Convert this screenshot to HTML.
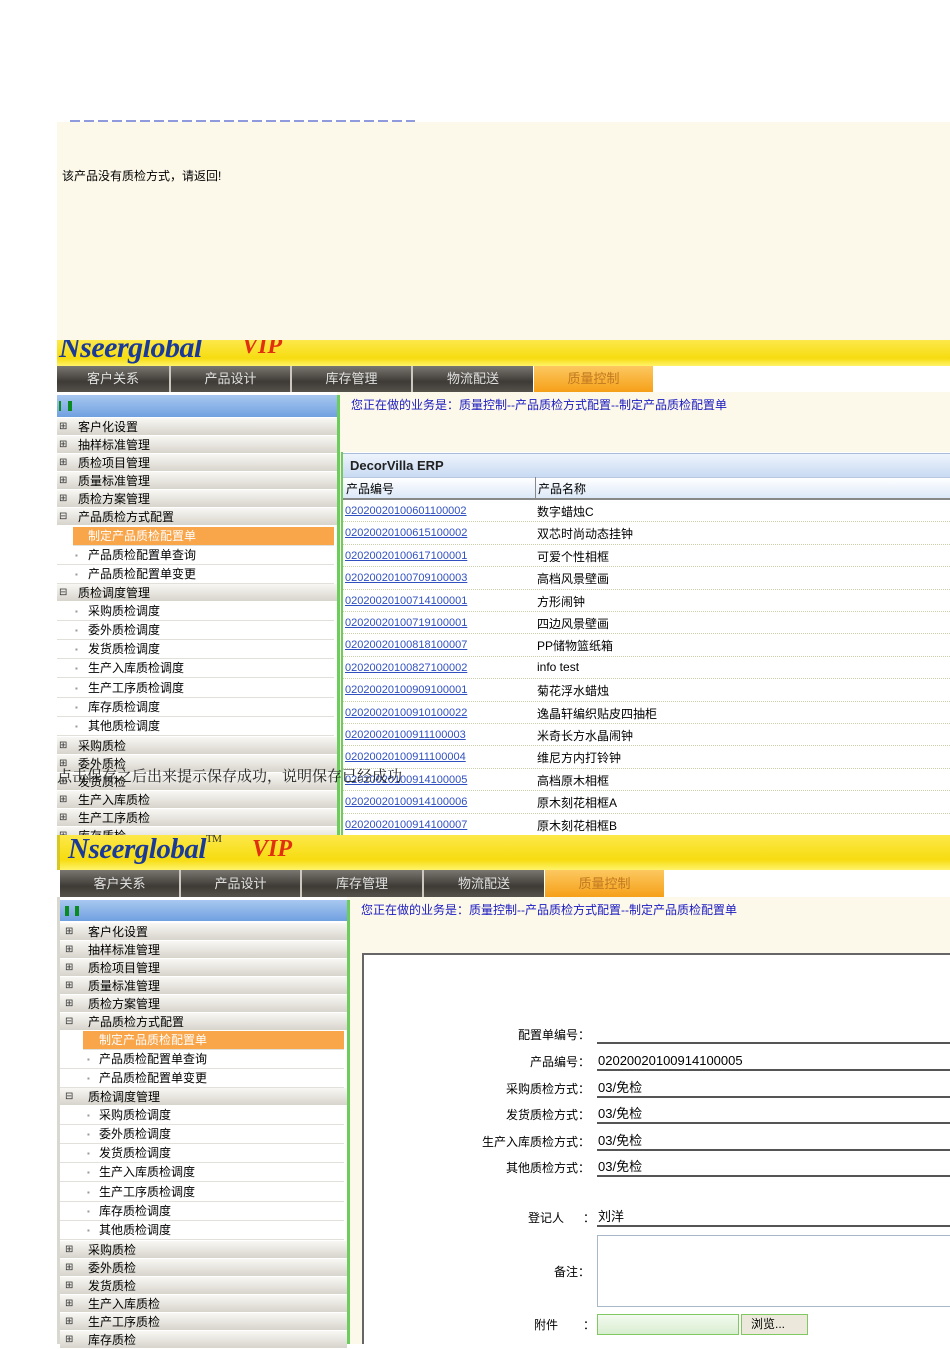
<!DOCTYPE html>
<html><head><meta charset="utf-8"><style>
*{margin:0;padding:0;box-sizing:border-box}
body{width:950px;height:1344px;position:relative;overflow:hidden;background:#fff;font-family:"Liberation Sans","Noto Sans CJK SC","WenQuanYi Zen Hei",sans-serif;font-size:12px;color:#000}
.a{position:absolute}
.cream{background:#fcf8ea}
.ban{background:linear-gradient(#fde84a,#f6dc10 70%,#fff36a)}
.logo{font-family:"Liberation Serif",serif;font-style:italic;font-weight:bold;color:#1a3a9a;font-size:28px;letter-spacing:-0.5px}
.vip{font-family:"Liberation Serif",serif;font-style:italic;font-weight:bold;color:#e03010;font-size:24px}
.tab{position:absolute;background:linear-gradient(#7a7670,#3e3b36 60%,#55514b);color:#e0e0e0;font-size:13px;text-align:center;border-left:2px solid #ccc8c0}
.tab.on{background:linear-gradient(#fcc860,#f6a018);color:#c07820;border:none}
.hd{position:absolute;background:linear-gradient(#a8c8f0,#70a0e0);}
.hd i{position:absolute;top:6px;width:4px;height:10px;background:#0a8a20}
.r{position:absolute;height:18px;line-height:18px;font-size:12px;background:linear-gradient(#f8f7f3,#d7d4cc);border-bottom:1px solid #fff}
.r b{font-weight:normal;position:absolute;left:2px;top:0;font-size:10px;color:#333}
.r span{position:absolute;left:21px}
.s{position:absolute;height:19px;line-height:19px;background:#fff;border-bottom:1px solid #e2e0da}
.s span{position:absolute;left:31px}
.s b{font-weight:normal;position:absolute;left:18px;font-size:8px;color:#999}
.s.on{background:#f9a54a;color:#fff}
.gl{position:absolute;background:#6ccc5c;width:3px}
.bc{position:absolute;color:#1a1ac0;font-size:12px}
.tr{position:absolute;left:343px;width:607px;height:22.4px;border-bottom:1px dotted #c8d0a8;background:#fff}
.tr a{position:absolute;left:2px;top:5px;color:#3050c0;text-decoration:underline;font-size:11px}
.tr span{position:absolute;left:194px;top:3px;font-size:12px}
.fl{position:absolute;width:240px;text-align:right;left:350px;font-size:12px}
.fv{position:absolute;left:597px;width:353px;border-bottom:2px solid #555;height:20px;font-size:13px;padding-left:1px;line-height:20px}
</style></head><body>

<div class="a cream" style="left:57px;top:122px;width:893px;height:218px"></div>
<div class="a" style="left:70px;top:120px;width:345px;height:2px;background:repeating-linear-gradient(90deg,#6070d0 0 10px,transparent 10px 14px);opacity:.7"></div>
<div class="a" style="left:62px;top:167px;font-size:12px">该产品没有质检方式，请返回!</div>

<div class="a ban" style="left:57px;top:340px;width:893px;height:26px;overflow:hidden">
<div class="a logo" style="left:2px;top:-9px;font-size:30px">Nseerglobal</div>
<div class="a vip" style="left:185px;top:-7px">VIP</div>
</div>
<div class="a" style="left:57px;top:366px;width:893px;height:26px;background:#fff"></div>
<div class="tab" style="left:57px;top:366px;width:112px;height:26px;line-height:26px;border:none">客户关系</div>
<div class="tab" style="left:169px;top:366px;width:121px;height:26px;line-height:26px">产品设计</div>
<div class="tab" style="left:290px;top:366px;width:121px;height:26px;line-height:26px">库存管理</div>
<div class="tab" style="left:411px;top:366px;width:122px;height:26px;line-height:26px">物流配送</div>
<div class="tab on" style="left:534px;top:366px;width:119px;height:26px;line-height:26px">质量控制</div>
<div class="a cream" style="left:337px;top:392px;width:613px;height:443px"></div>
<div class="a" style="left:57px;top:392px;width:280px;height:443px;background:#fff"></div>
<div class="hd" style="left:57px;top:395px;width:280px;height:22px"><i style="left:2px;width:2px"></i><i style="left:11px"></i></div>
<div class="gl" style="left:337px;top:395px;height:440px"></div>
<div class="bc" style="left:351px;top:396px">您正在做的业务是：质量控制--产品质检方式配置--制定产品质检配置单</div>

<div class="r" style="left:57px;top:418px;width:280px"><b>⊞</b><span>客户化设置</span></div>
<div class="r" style="left:57px;top:436px;width:280px"><b>⊞</b><span>抽样标准管理</span></div>
<div class="r" style="left:57px;top:454px;width:280px"><b>⊞</b><span>质检项目管理</span></div>
<div class="r" style="left:57px;top:472px;width:280px"><b>⊞</b><span>质量标准管理</span></div>
<div class="r" style="left:57px;top:490px;width:280px"><b>⊞</b><span>质检方案管理</span></div>
<div class="r" style="left:57px;top:508px;width:280px"><b>⊟</b><span>产品质检方式配置</span></div>
<div class="s on" style="left:73px;top:527px;width:261px"><span style="left:15px">制定产品质检配置单</span></div>
<div class="s" style="left:57px;top:546px;width:277px"><b>▪</b><span>产品质检配置单查询</span></div>
<div class="s" style="left:57px;top:565px;width:277px"><b>▪</b><span>产品质检配置单变更</span></div>
<div class="r" style="left:57px;top:584px;width:280px"><b>⊟</b><span>质检调度管理</span></div>
<div class="s" style="left:57px;top:602px;width:277px"><b>▪</b><span>采购质检调度</span></div>
<div class="s" style="left:57px;top:621px;width:277px"><b>▪</b><span>委外质检调度</span></div>
<div class="s" style="left:57px;top:640px;width:277px"><b>▪</b><span>发货质检调度</span></div>
<div class="s" style="left:57px;top:659px;width:277px"><b>▪</b><span>生产入库质检调度</span></div>
<div class="s" style="left:57px;top:679px;width:277px"><b>▪</b><span>生产工序质检调度</span></div>
<div class="s" style="left:57px;top:698px;width:277px"><b>▪</b><span>库存质检调度</span></div>
<div class="s" style="left:57px;top:717px;width:277px"><b>▪</b><span>其他质检调度</span></div>
<div class="r" style="left:57px;top:737px;width:280px"><b>⊞</b><span>采购质检</span></div>
<div class="r" style="left:57px;top:755px;width:280px"><b>⊞</b><span>委外质检</span></div>
<div class="r" style="left:57px;top:773px;width:280px"><b>⊞</b><span>发货质检</span></div>
<div class="r" style="left:57px;top:791px;width:280px"><b>⊞</b><span>生产入库质检</span></div>
<div class="r" style="left:57px;top:809px;width:280px"><b>⊞</b><span>生产工序质检</span></div>
<div class="r" style="left:57px;top:827px;width:280px"><b>⊞</b><span>库存质检</span></div>

<div class="a" style="left:341px;top:452px;width:609px;height:383px;background:#fff;border-left:2px solid #6ccc5c"></div>
<div class="a" style="left:343px;top:453px;width:607px;height:24px;background:linear-gradient(#eef4fc,#c8daf2);border-top:1px solid #a8bcd8;font-weight:bold;font-size:13px;line-height:24px;padding-left:7px;color:#222">DecorVilla ERP</div>
<div class="a" style="left:343px;top:477px;width:607px;height:23px;background:linear-gradient(#fff,#dce8f8);border-bottom:2px solid #888;border-top:1px solid #b8c8e0"></div>
<div class="a" style="left:346px;top:480px;font-size:12px">产品编号</div>
<div class="a" style="left:535px;top:477px;width:1px;height:23px;background:#888"></div>
<div class="a" style="left:538px;top:480px;font-size:12px">产品名称</div>
<div class="tr" style="top:500px"><a>02020020100601100002</a><span>数字蜡烛C</span></div>
<div class="tr" style="top:522.4px"><a>02020020100615100002</a><span>双芯时尚动态挂钟</span></div>
<div class="tr" style="top:544.8px"><a>02020020100617100001</a><span>可爱个性相框</span></div>
<div class="tr" style="top:567.2px"><a>02020020100709100003</a><span>高档风景壁画</span></div>
<div class="tr" style="top:589.6px"><a>02020020100714100001</a><span>方形闹钟</span></div>
<div class="tr" style="top:612px"><a>02020020100719100001</a><span>四边风景壁画</span></div>
<div class="tr" style="top:634.4px"><a>02020020100818100007</a><span>PP储物篮纸箱</span></div>
<div class="tr" style="top:656.8px"><a>02020020100827100002</a><span>info test</span></div>
<div class="tr" style="top:679.2px"><a>02020020100909100001</a><span>菊花浮水蜡烛</span></div>
<div class="tr" style="top:701.6px"><a>02020020100910100022</a><span>逸晶轩编织贴皮四抽柜</span></div>
<div class="tr" style="top:724px"><a>02020020100911100003</a><span>米奇长方水晶闹钟</span></div>
<div class="tr" style="top:746.4px"><a>02020020100911100004</a><span>维尼方内打铃钟</span></div>
<div class="tr" style="top:768.8px"><a>02020020100914100005</a><span>高档原木相框</span></div>
<div class="tr" style="top:791.2px"><a>02020020100914100006</a><span>原木刻花相框A</span></div>
<div class="tr" style="top:813.6px"><a>02020020100914100007</a><span>原木刻花相框B</span></div>
<div class="a" style="left:57px;top:765px;font-family:'Noto Serif CJK SC','Liberation Serif',serif;font-size:15px;color:#222">点击保存之后出来提示保存成功，说明保存已经成功</div>

<div class="a ban" style="left:57px;top:835px;width:893px;height:35px;border-left:3px solid #d8c820"></div>
<div class="a logo" style="left:68px;top:833px;font-size:29px">Nseerglobal<sup style="font-size:11px;font-style:normal;font-weight:normal;color:#333;vertical-align:top">TM</sup></div>
<div class="a vip" style="left:252px;top:836px">VIP</div>
<div class="a" style="left:57px;top:870px;width:893px;height:27px;background:#fff"></div>
<div class="tab" style="left:60px;top:870px;width:119px;height:27px;line-height:27px;border:none">客户关系</div>
<div class="tab" style="left:179px;top:870px;width:121px;height:27px;line-height:27px">产品设计</div>
<div class="tab" style="left:300px;top:870px;width:122px;height:27px;line-height:27px">库存管理</div>
<div class="tab" style="left:422px;top:870px;width:122px;height:27px;line-height:27px">物流配送</div>
<div class="tab on" style="left:545px;top:870px;width:119px;height:27px;line-height:27px">质量控制</div>
<div class="a cream" style="left:347px;top:897px;width:603px;height:447px"></div>
<div class="a" style="left:57px;top:897px;width:290px;height:447px;background:#fff;border-left:3px solid #d8d8d0"></div>
<div class="hd" style="left:60px;top:900px;width:287px;height:21px"><i style="left:5px"></i><i style="left:15px"></i></div>
<div class="gl" style="left:347px;top:900px;height:444px"></div>
<div class="bc" style="left:361px;top:901px">您正在做的业务是：质量控制--产品质检方式配置--制定产品质检配置单</div>

<div class="r" style="left:60px;top:923px;width:287px"><b style="left:5px">⊞</b><span style="left:28px">客户化设置</span></div>
<div class="r" style="left:60px;top:941px;width:287px"><b style="left:5px">⊞</b><span style="left:28px">抽样标准管理</span></div>
<div class="r" style="left:60px;top:959px;width:287px"><b style="left:5px">⊞</b><span style="left:28px">质检项目管理</span></div>
<div class="r" style="left:60px;top:977px;width:287px"><b style="left:5px">⊞</b><span style="left:28px">质量标准管理</span></div>
<div class="r" style="left:60px;top:995px;width:287px"><b style="left:5px">⊞</b><span style="left:28px">质检方案管理</span></div>
<div class="r" style="left:60px;top:1013px;width:287px"><b style="left:5px">⊟</b><span style="left:28px">产品质检方式配置</span></div>
<div class="s on" style="left:83px;top:1031px;width:261px"><span style="left:16px">制定产品质检配置单</span></div>
<div class="s" style="left:60px;top:1050px;width:284px"><b style="left:27px">▪</b><span style="left:39px">产品质检配置单查询</span></div>
<div class="s" style="left:60px;top:1069px;width:284px"><b style="left:27px">▪</b><span style="left:39px">产品质检配置单变更</span></div>
<div class="r" style="left:60px;top:1088px;width:287px"><b style="left:5px">⊟</b><span style="left:28px">质检调度管理</span></div>
<div class="s" style="left:60px;top:1106px;width:284px"><b style="left:27px">▪</b><span style="left:39px">采购质检调度</span></div>
<div class="s" style="left:60px;top:1125px;width:284px"><b style="left:27px">▪</b><span style="left:39px">委外质检调度</span></div>
<div class="s" style="left:60px;top:1144px;width:284px"><b style="left:27px">▪</b><span style="left:39px">发货质检调度</span></div>
<div class="s" style="left:60px;top:1163px;width:284px"><b style="left:27px">▪</b><span style="left:39px">生产入库质检调度</span></div>
<div class="s" style="left:60px;top:1183px;width:284px"><b style="left:27px">▪</b><span style="left:39px">生产工序质检调度</span></div>
<div class="s" style="left:60px;top:1202px;width:284px"><b style="left:27px">▪</b><span style="left:39px">库存质检调度</span></div>
<div class="s" style="left:60px;top:1221px;width:284px"><b style="left:27px">▪</b><span style="left:39px">其他质检调度</span></div>
<div class="r" style="left:60px;top:1241px;width:287px"><b style="left:5px">⊞</b><span style="left:28px">采购质检</span></div>
<div class="r" style="left:60px;top:1259px;width:287px"><b style="left:5px">⊞</b><span style="left:28px">委外质检</span></div>
<div class="r" style="left:60px;top:1277px;width:287px"><b style="left:5px">⊞</b><span style="left:28px">发货质检</span></div>
<div class="r" style="left:60px;top:1295px;width:287px"><b style="left:5px">⊞</b><span style="left:28px">生产入库质检</span></div>
<div class="r" style="left:60px;top:1313px;width:287px"><b style="left:5px">⊞</b><span style="left:28px">生产工序质检</span></div>
<div class="r" style="left:60px;top:1331px;width:287px"><b style="left:5px">⊞</b><span style="left:28px">库存质检</span></div>

<div class="a" style="left:362px;top:953px;width:588px;height:391px;background:#fff;border-left:2px solid #666;border-top:2px solid #666"></div>
<div class="fl" style="top:1026px">配置单编号：</div><div class="fv" style="top:1024px"></div>
<div class="fl" style="top:1053px">产品编号：</div><div class="fv" style="top:1051px">02020020100914100005</div>
<div class="fl" style="top:1080px">采购质检方式：</div><div class="fv" style="top:1078px">03/免检</div>
<div class="fl" style="top:1106px">发货质检方式：</div><div class="fv" style="top:1104px">03/免检</div>
<div class="fl" style="top:1133px">生产入库质检方式：</div><div class="fv" style="top:1131px">03/免检</div>
<div class="fl" style="top:1159px">其他质检方式：</div><div class="fv" style="top:1157px">03/免检</div>
<div class="a" style="left:528px;top:1209px">登记人</div><div class="a" style="left:583px;top:1209px">：</div>
<div class="fv" style="top:1207px">刘洋</div>
<div class="fl" style="top:1263px">备注：</div>
<div class="a" style="left:597px;top:1235px;width:353px;height:72px;border:1px solid #a8b8c8;border-right:none"></div>
<div class="a" style="left:534px;top:1316px">附件</div><div class="a" style="left:583px;top:1316px">：</div>
<div class="a" style="left:597px;top:1314px;width:142px;height:21px;border:1px solid #80c860;background:linear-gradient(#f4faf0,#d8eed0)"></div>
<div class="a" style="left:741px;top:1314px;width:67px;height:21px;border:1px solid #80c860;background:#ece9dc;font-size:12px;padding-left:9px;line-height:19px">浏览...</div>
</body></html>
